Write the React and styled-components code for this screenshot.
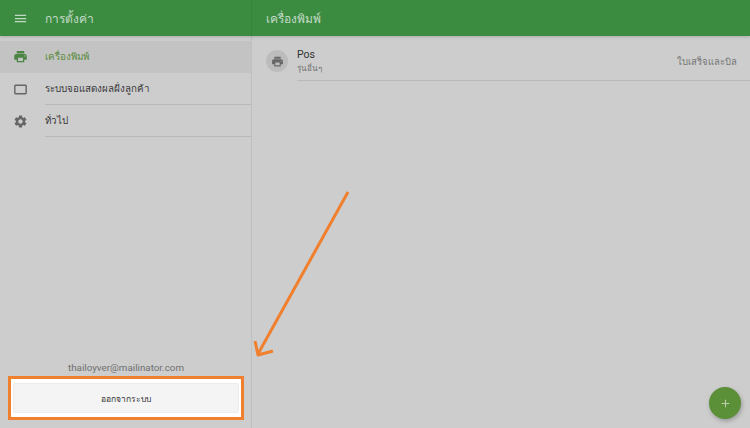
import React from "react";
import styled, { createGlobalStyle } from "styled-components";
import { MdMenu, MdPrint, MdSettings, MdCropLandscape, MdAdd } from "react-icons/md";

const GlobalStyle = createGlobalStyle`
  html, body {
    margin: 0;
    padding: 0;
    height: 100%;
    overflow: hidden;
  }
  #root {
    height: 100%;
  }
  * {
    box-sizing: border-box;
  }
`;

const Page = styled.div`
  position: relative;
  width: 750px;
  height: 428px;
  display: flex;
  flex-direction: column;
  overflow: hidden;
  background: #cdcdcd;
  font-family: Roboto, "Noto Sans", "Liberation Sans", sans-serif;
`;

const Toolbar = styled.header`
  flex: 0 0 36px;
  display: flex;
  background: #3b8c41;
  color: #c3d9c5;
  box-shadow: 0 1px 3px rgba(0, 0, 0, 0.18);
  z-index: 1;
`;

const ToolbarLeft = styled.div`
  width: 252px;
  display: flex;
  align-items: center;
  padding-left: 13px;
  border-right: 1px solid #388539;

  svg {
    font-size: 15px;
    margin-right: 17px;
  }
`;

const ToolbarTitle = styled.div`
  font-size: 12px;
  padding-left: ${(p) => (p.$main ? "14px" : "0")};
  align-self: center;
`;

const Body = styled.div`
  flex: 1;
  display: flex;
  min-height: 0;
`;

const Sidebar = styled.aside`
  width: 252px;
  display: flex;
  flex-direction: column;
  padding-top: 5px;
  border-right: 1px solid #bfbfbf;
`;

const NavItem = styled.div`
  height: 32px;
  display: flex;
  align-items: center;
  background: ${(p) => (p.$active ? "#c3c3c3" : "transparent")};
  color: ${(p) => (p.$active ? "#5d8c41" : "#383838")};
  font-size: 9.8px;
`;

const NavIcon = styled.div`
  width: 45px;
  padding-left: ${(p) => (p.$wide ? "12px" : "13px")};
  padding-bottom: ${(p) => (p.$active ? "1px" : "0")};
  display: flex;
  color: ${(p) => (p.$active ? "#4c8544" : "#666")};
  font-size: ${(p) => (p.$wide ? "17px" : "15px")};
`;

const NavLabel = styled.div`
  flex: 1;
  height: 100%;
  display: flex;
  align-items: center;
  border-bottom: 1px solid ${(p) => (p.$active ? "transparent" : "#b9b9b9")};
`;

const SidebarFooter = styled.div`
  margin-top: auto;
  padding: 0 7px 8px 8px;
`;

const Email = styled.div`
  text-align: center;
  font-size: 9.8px;
  color: #707070;
  margin-bottom: 1px;
  line-height: 14px;
`;

const Highlight = styled.div`
  border: 3px solid #f07f2e;
  background: #fff;
  padding: 4px 2px;
`;

const LogoutButton = styled.button`
  display: block;
  width: 100%;
  height: 30px;
  border: 1px solid #ececec;
  border-radius: 2px;
  background: #f4f4f4;
  color: #333;
  font-family: inherit;
  font-size: 8.5px;
  padding: 1px 0 0;
`;

const Main = styled.main`
  position: relative;
  flex: 1;
  padding-top: 5px;
`;

const PrinterRow = styled.div`
  display: flex;
  align-items: center;
  height: 40px;
  padding-left: 14px;
`;

const PrinterAvatar = styled.div`
  width: 22px;
  height: 22px;
  border-radius: 50%;
  background: #bcbcbc;
  color: #666;
  display: flex;
  align-items: center;
  justify-content: center;
  font-size: 13px;
  margin-right: 9px;
`;

const PrinterContent = styled.div`
  flex: 1;
  height: 100%;
  display: flex;
  align-items: center;
  justify-content: space-between;
  padding-right: 13px;
  border-bottom: 1px solid #b9b9b9;
`;

const PrinterText = styled.div`
  padding-top: 1px;
`;

const PrinterName = styled.div`
  font-size: 10.5px;
  line-height: 14px;
  color: #333;
`;

const PrinterModel = styled.div`
  font-size: 8.2px;
  line-height: 12px;
  color: #737373;
`;

const PrinterType = styled.div`
  font-size: 9.5px;
  padding-top: 1px;
  color: #767676;
`;

const Fab = styled.button`
  position: absolute;
  right: 9px;
  bottom: 9px;
  width: 32px;
  height: 32px;
  border: 0;
  padding: 0;
  border-radius: 50%;
  background: #5b8f38;
  color: #bcd0ae;
  display: flex;
  align-items: center;
  justify-content: center;
  font-size: 13px;
  box-shadow: 1px 2px 4px rgba(0, 0, 0, 0.25);
`;

const Arrow = styled.svg`
  position: absolute;
  left: 0;
  top: 0;
  pointer-events: none;
  z-index: 2;
`;

const App = () => {
  return (
    <Page>
      <GlobalStyle />
      <Toolbar>
        <ToolbarLeft>
          <MdMenu />
          <ToolbarTitle>การตั้งค่า</ToolbarTitle>
        </ToolbarLeft>
        <ToolbarTitle $main>เครื่องพิมพ์</ToolbarTitle>
      </Toolbar>
      <Body>
        <Sidebar>
          <NavItem $active>
            <NavIcon $active>
              <MdPrint />
            </NavIcon>
            <NavLabel $active>เครื่องพิมพ์</NavLabel>
          </NavItem>
          <NavItem>
            <NavIcon $wide>
              <MdCropLandscape />
            </NavIcon>
            <NavLabel>ระบบจอแสดงผลฝั่งลูกค้า</NavLabel>
          </NavItem>
          <NavItem>
            <NavIcon>
              <MdSettings />
            </NavIcon>
            <NavLabel>ทั่วไป</NavLabel>
          </NavItem>
          <SidebarFooter>
            <Email>thailoyver@mailinator.com</Email>
            <Highlight>
              <LogoutButton>ออกจากระบบ</LogoutButton>
            </Highlight>
          </SidebarFooter>
        </Sidebar>
        <Main>
          <PrinterRow>
            <PrinterAvatar>
              <MdPrint />
            </PrinterAvatar>
            <PrinterContent>
              <PrinterText>
                <PrinterName>Pos</PrinterName>
                <PrinterModel>รุ่นอื่นๆ</PrinterModel>
              </PrinterText>
              <PrinterType>ใบเสร็จและบิล</PrinterType>
            </PrinterContent>
          </PrinterRow>
          <Fab>
            <MdAdd />
          </Fab>
        </Main>
      </Body>
      <Arrow width="750" height="428" viewBox="0 0 750 428" fill="none">
        <path
          d="M348 192L258 354M255 341L258 355L273 351"
          stroke="#f07f2e"
          strokeWidth="3"
          strokeLinejoin="round"
        />
      </Arrow>
    </Page>
  );
};

export default App;
